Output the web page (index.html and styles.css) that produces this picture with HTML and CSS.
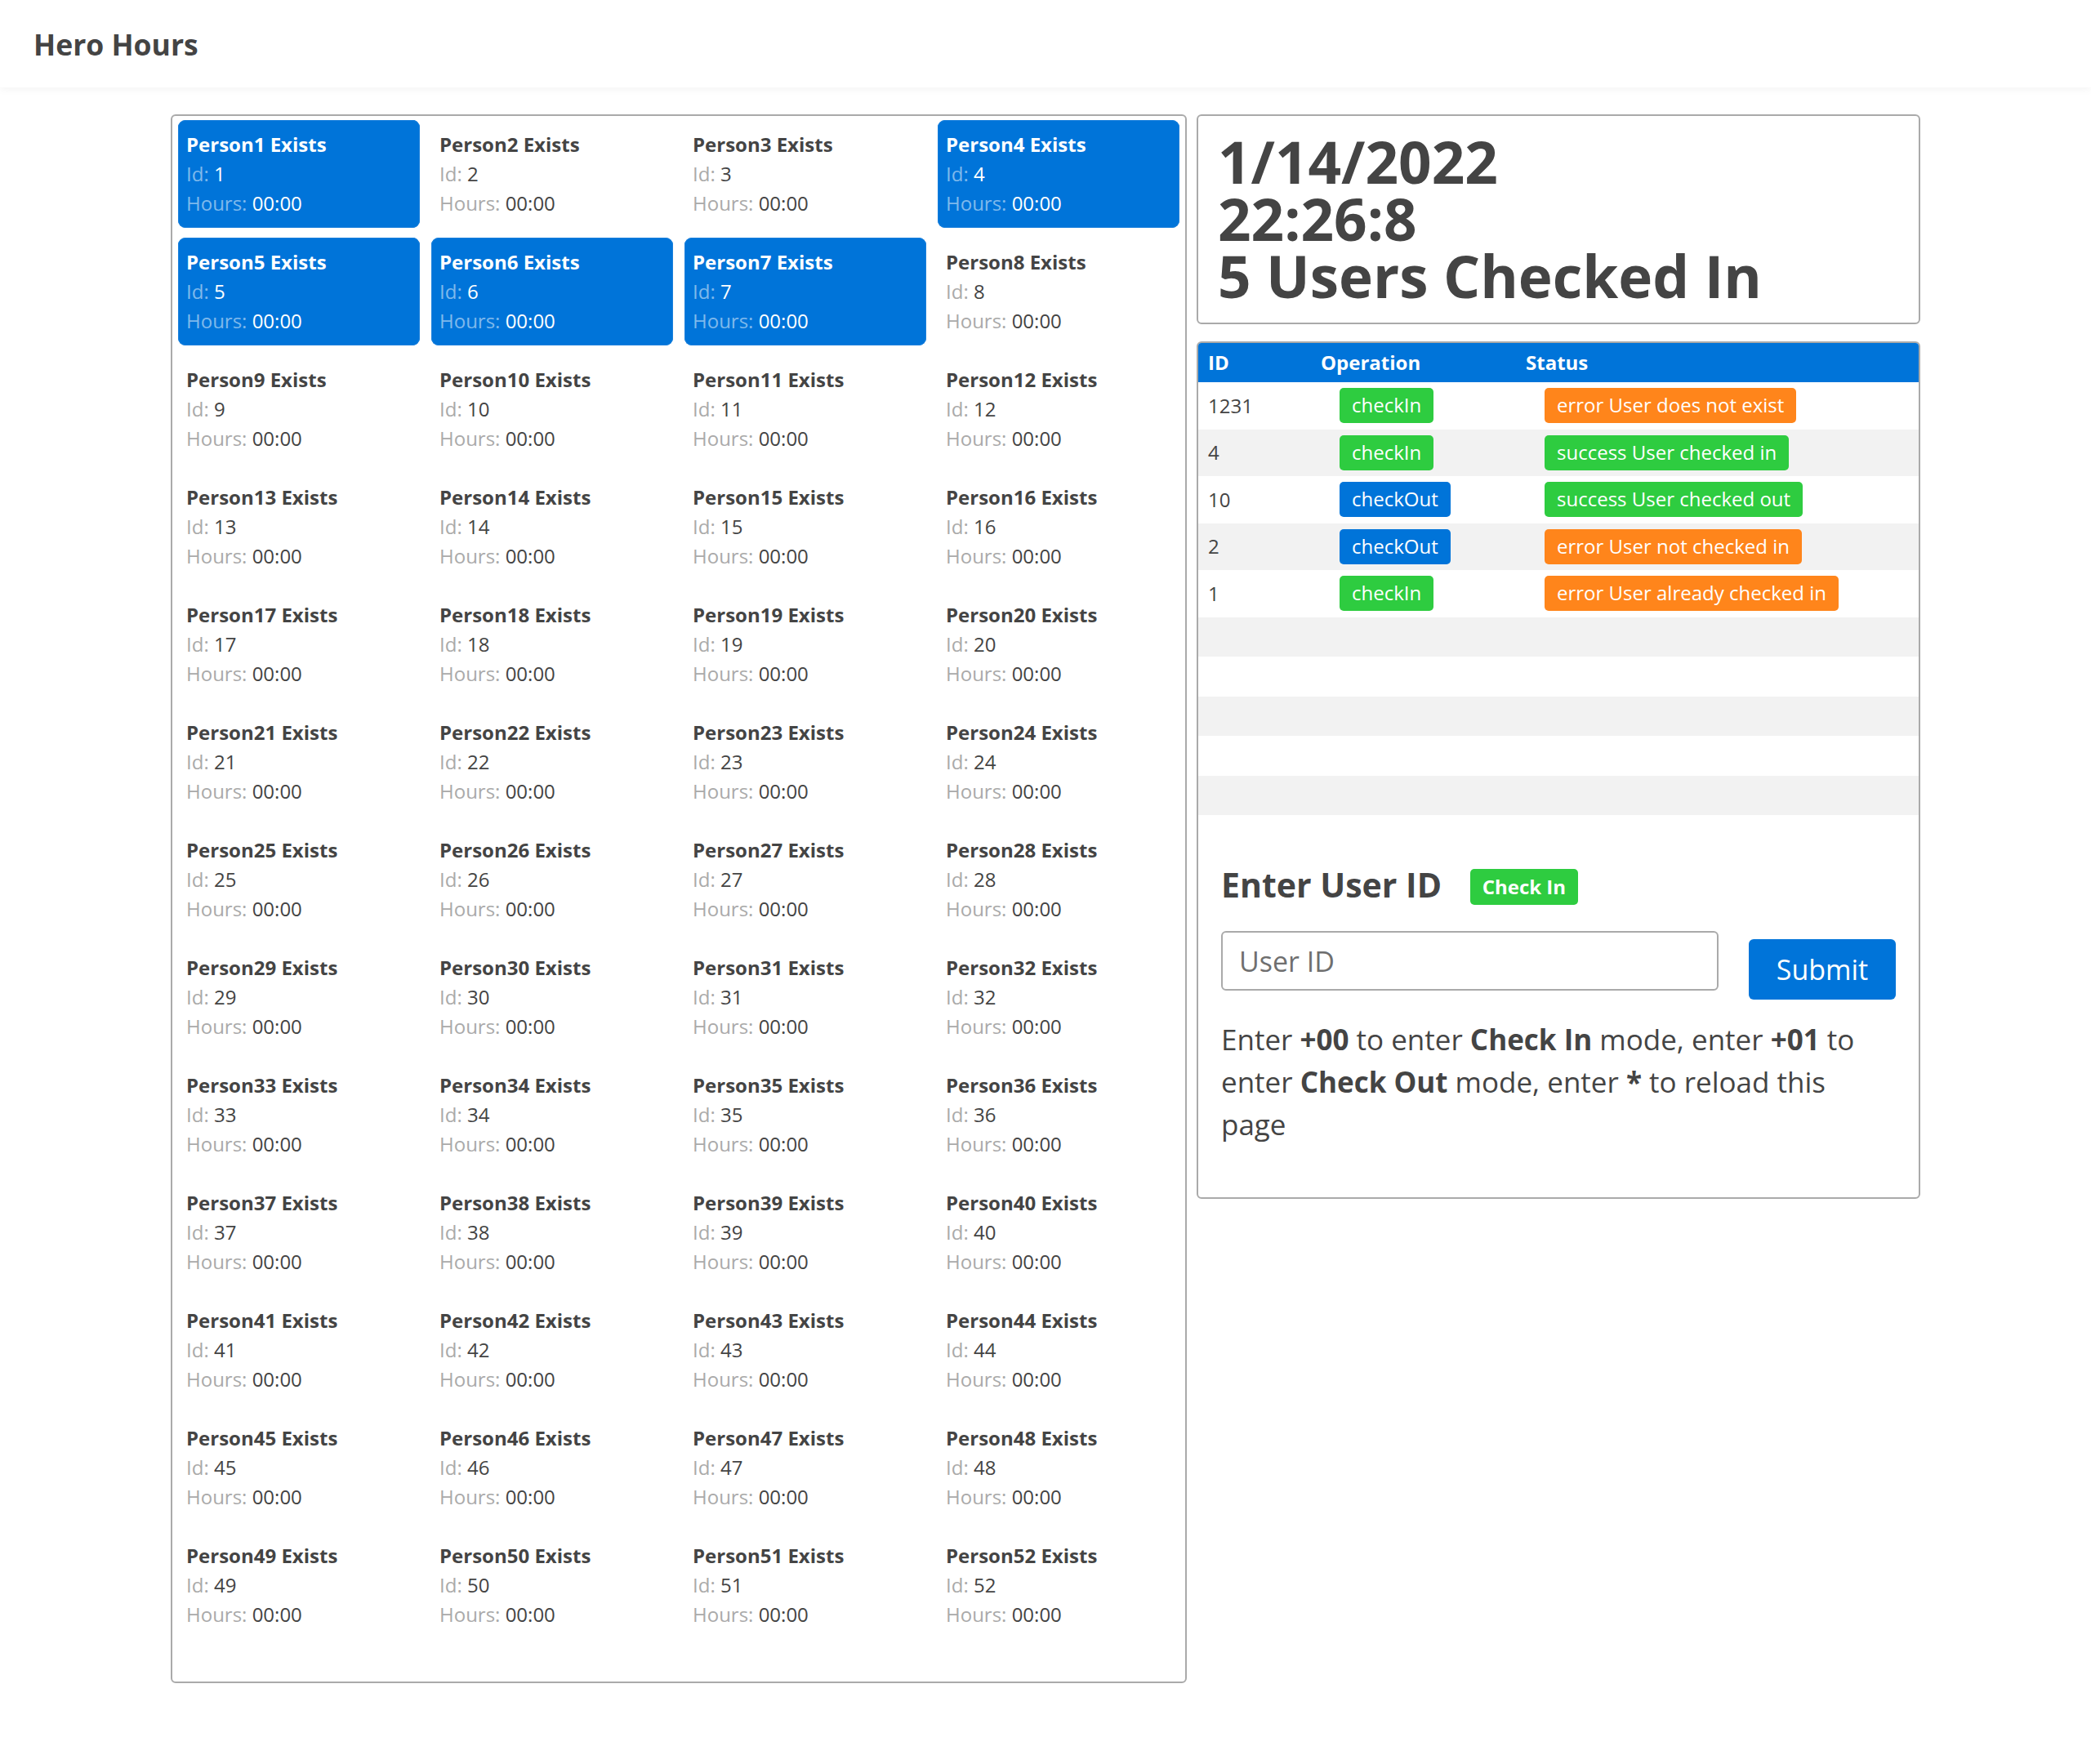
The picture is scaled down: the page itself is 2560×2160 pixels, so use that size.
FILE: index.html
```html
<!DOCTYPE html>
<html lang="en">
<head>
    <meta charset="UTF-8">
    <meta name="viewport" content="width=device-width, initial-scale=1.0">
    <title>Hero Hours</title>
    <link rel="stylesheet" href="styles.css">
</head>
<body>

<header class="topbar">
    <span class="brand">Hero Hours</span>
</header>

<main class="layout">

<section class="roster">
    <div class="person-card is-in"><div class="person-name">Person1 Exists</div><div><span class="label">Id:</span> 1</div><div><span class="label">Hours:</span> 00:00</div></div>
    <div class="person-card"><div class="person-name">Person2 Exists</div><div><span class="label">Id:</span> 2</div><div><span class="label">Hours:</span> 00:00</div></div>
    <div class="person-card"><div class="person-name">Person3 Exists</div><div><span class="label">Id:</span> 3</div><div><span class="label">Hours:</span> 00:00</div></div>
    <div class="person-card is-in"><div class="person-name">Person4 Exists</div><div><span class="label">Id:</span> 4</div><div><span class="label">Hours:</span> 00:00</div></div>
    <div class="person-card is-in"><div class="person-name">Person5 Exists</div><div><span class="label">Id:</span> 5</div><div><span class="label">Hours:</span> 00:00</div></div>
    <div class="person-card is-in"><div class="person-name">Person6 Exists</div><div><span class="label">Id:</span> 6</div><div><span class="label">Hours:</span> 00:00</div></div>
    <div class="person-card is-in"><div class="person-name">Person7 Exists</div><div><span class="label">Id:</span> 7</div><div><span class="label">Hours:</span> 00:00</div></div>
    <div class="person-card"><div class="person-name">Person8 Exists</div><div><span class="label">Id:</span> 8</div><div><span class="label">Hours:</span> 00:00</div></div>
    <div class="person-card"><div class="person-name">Person9 Exists</div><div><span class="label">Id:</span> 9</div><div><span class="label">Hours:</span> 00:00</div></div>
    <div class="person-card"><div class="person-name">Person10 Exists</div><div><span class="label">Id:</span> 10</div><div><span class="label">Hours:</span> 00:00</div></div>
    <div class="person-card"><div class="person-name">Person11 Exists</div><div><span class="label">Id:</span> 11</div><div><span class="label">Hours:</span> 00:00</div></div>
    <div class="person-card"><div class="person-name">Person12 Exists</div><div><span class="label">Id:</span> 12</div><div><span class="label">Hours:</span> 00:00</div></div>
    <div class="person-card"><div class="person-name">Person13 Exists</div><div><span class="label">Id:</span> 13</div><div><span class="label">Hours:</span> 00:00</div></div>
    <div class="person-card"><div class="person-name">Person14 Exists</div><div><span class="label">Id:</span> 14</div><div><span class="label">Hours:</span> 00:00</div></div>
    <div class="person-card"><div class="person-name">Person15 Exists</div><div><span class="label">Id:</span> 15</div><div><span class="label">Hours:</span> 00:00</div></div>
    <div class="person-card"><div class="person-name">Person16 Exists</div><div><span class="label">Id:</span> 16</div><div><span class="label">Hours:</span> 00:00</div></div>
    <div class="person-card"><div class="person-name">Person17 Exists</div><div><span class="label">Id:</span> 17</div><div><span class="label">Hours:</span> 00:00</div></div>
    <div class="person-card"><div class="person-name">Person18 Exists</div><div><span class="label">Id:</span> 18</div><div><span class="label">Hours:</span> 00:00</div></div>
    <div class="person-card"><div class="person-name">Person19 Exists</div><div><span class="label">Id:</span> 19</div><div><span class="label">Hours:</span> 00:00</div></div>
    <div class="person-card"><div class="person-name">Person20 Exists</div><div><span class="label">Id:</span> 20</div><div><span class="label">Hours:</span> 00:00</div></div>
    <div class="person-card"><div class="person-name">Person21 Exists</div><div><span class="label">Id:</span> 21</div><div><span class="label">Hours:</span> 00:00</div></div>
    <div class="person-card"><div class="person-name">Person22 Exists</div><div><span class="label">Id:</span> 22</div><div><span class="label">Hours:</span> 00:00</div></div>
    <div class="person-card"><div class="person-name">Person23 Exists</div><div><span class="label">Id:</span> 23</div><div><span class="label">Hours:</span> 00:00</div></div>
    <div class="person-card"><div class="person-name">Person24 Exists</div><div><span class="label">Id:</span> 24</div><div><span class="label">Hours:</span> 00:00</div></div>
    <div class="person-card"><div class="person-name">Person25 Exists</div><div><span class="label">Id:</span> 25</div><div><span class="label">Hours:</span> 00:00</div></div>
    <div class="person-card"><div class="person-name">Person26 Exists</div><div><span class="label">Id:</span> 26</div><div><span class="label">Hours:</span> 00:00</div></div>
    <div class="person-card"><div class="person-name">Person27 Exists</div><div><span class="label">Id:</span> 27</div><div><span class="label">Hours:</span> 00:00</div></div>
    <div class="person-card"><div class="person-name">Person28 Exists</div><div><span class="label">Id:</span> 28</div><div><span class="label">Hours:</span> 00:00</div></div>
    <div class="person-card"><div class="person-name">Person29 Exists</div><div><span class="label">Id:</span> 29</div><div><span class="label">Hours:</span> 00:00</div></div>
    <div class="person-card"><div class="person-name">Person30 Exists</div><div><span class="label">Id:</span> 30</div><div><span class="label">Hours:</span> 00:00</div></div>
    <div class="person-card"><div class="person-name">Person31 Exists</div><div><span class="label">Id:</span> 31</div><div><span class="label">Hours:</span> 00:00</div></div>
    <div class="person-card"><div class="person-name">Person32 Exists</div><div><span class="label">Id:</span> 32</div><div><span class="label">Hours:</span> 00:00</div></div>
    <div class="person-card"><div class="person-name">Person33 Exists</div><div><span class="label">Id:</span> 33</div><div><span class="label">Hours:</span> 00:00</div></div>
    <div class="person-card"><div class="person-name">Person34 Exists</div><div><span class="label">Id:</span> 34</div><div><span class="label">Hours:</span> 00:00</div></div>
    <div class="person-card"><div class="person-name">Person35 Exists</div><div><span class="label">Id:</span> 35</div><div><span class="label">Hours:</span> 00:00</div></div>
    <div class="person-card"><div class="person-name">Person36 Exists</div><div><span class="label">Id:</span> 36</div><div><span class="label">Hours:</span> 00:00</div></div>
    <div class="person-card"><div class="person-name">Person37 Exists</div><div><span class="label">Id:</span> 37</div><div><span class="label">Hours:</span> 00:00</div></div>
    <div class="person-card"><div class="person-name">Person38 Exists</div><div><span class="label">Id:</span> 38</div><div><span class="label">Hours:</span> 00:00</div></div>
    <div class="person-card"><div class="person-name">Person39 Exists</div><div><span class="label">Id:</span> 39</div><div><span class="label">Hours:</span> 00:00</div></div>
    <div class="person-card"><div class="person-name">Person40 Exists</div><div><span class="label">Id:</span> 40</div><div><span class="label">Hours:</span> 00:00</div></div>
    <div class="person-card"><div class="person-name">Person41 Exists</div><div><span class="label">Id:</span> 41</div><div><span class="label">Hours:</span> 00:00</div></div>
    <div class="person-card"><div class="person-name">Person42 Exists</div><div><span class="label">Id:</span> 42</div><div><span class="label">Hours:</span> 00:00</div></div>
    <div class="person-card"><div class="person-name">Person43 Exists</div><div><span class="label">Id:</span> 43</div><div><span class="label">Hours:</span> 00:00</div></div>
    <div class="person-card"><div class="person-name">Person44 Exists</div><div><span class="label">Id:</span> 44</div><div><span class="label">Hours:</span> 00:00</div></div>
    <div class="person-card"><div class="person-name">Person45 Exists</div><div><span class="label">Id:</span> 45</div><div><span class="label">Hours:</span> 00:00</div></div>
    <div class="person-card"><div class="person-name">Person46 Exists</div><div><span class="label">Id:</span> 46</div><div><span class="label">Hours:</span> 00:00</div></div>
    <div class="person-card"><div class="person-name">Person47 Exists</div><div><span class="label">Id:</span> 47</div><div><span class="label">Hours:</span> 00:00</div></div>
    <div class="person-card"><div class="person-name">Person48 Exists</div><div><span class="label">Id:</span> 48</div><div><span class="label">Hours:</span> 00:00</div></div>
    <div class="person-card"><div class="person-name">Person49 Exists</div><div><span class="label">Id:</span> 49</div><div><span class="label">Hours:</span> 00:00</div></div>
    <div class="person-card"><div class="person-name">Person50 Exists</div><div><span class="label">Id:</span> 50</div><div><span class="label">Hours:</span> 00:00</div></div>
    <div class="person-card"><div class="person-name">Person51 Exists</div><div><span class="label">Id:</span> 51</div><div><span class="label">Hours:</span> 00:00</div></div>
    <div class="person-card"><div class="person-name">Person52 Exists</div><div><span class="label">Id:</span> 52</div><div><span class="label">Hours:</span> 00:00</div></div>
</section>

<aside class="side">

    <div class="panel status-box">
        <h1>1/14/2022<br>22:26:8<br>5 Users Checked In</h1>
    </div>

    <div class="panel entry-box">
        <table class="log-table">
            <colgroup>
                <col class="col-id">
                <col class="col-op">
                <col>
            </colgroup>
            <thead>
                <tr><th>ID</th><th>Operation</th><th>Status</th></tr>
            </thead>
            <tbody>
                <tr class="filled"><td>1231</td><td><span class="tag green">checkIn</span></td><td><span class="tag orange">error User does not exist</span></td></tr>
                <tr class="filled"><td>4</td><td><span class="tag green">checkIn</span></td><td><span class="tag green">success User checked in</span></td></tr>
                <tr class="filled"><td>10</td><td><span class="tag blue">checkOut</span></td><td><span class="tag green">success User checked out</span></td></tr>
                <tr class="filled"><td>2</td><td><span class="tag blue">checkOut</span></td><td><span class="tag orange">error User not checked in</span></td></tr>
                <tr class="filled"><td>1</td><td><span class="tag green">checkIn</span></td><td><span class="tag orange">error User already checked in</span></td></tr>
                <tr><td></td><td></td><td></td></tr>
                <tr><td></td><td></td><td></td></tr>
                <tr><td></td><td></td><td></td></tr>
                <tr><td></td><td></td><td></td></tr>
                <tr><td></td><td></td><td></td></tr>
            </tbody>
        </table>

        <div class="entry-form">
            <h3>Enter User ID <span class="mode-badge">Check In</span></h3>
            <form class="entry-row">
                <input type="text" placeholder="User ID">
                <button type="button">Submit</button>
            </form>
            <p class="hint">Enter <strong>+00</strong> to enter <strong>Check In</strong> mode, enter <strong>+01</strong> to enter <strong>Check Out</strong> mode, enter <strong>*</strong> to reload this page</p>
        </div>
    </div>

</aside>

</main>

</body>
</html>
```

FILE: styles.css
```css
body {
    margin: 0;
    font-family: "Open Sans", "Liberation Sans", sans-serif;
    color: #444;
    background-color: #fff;
}

.topbar {
    height: 107px;
    display: flex;
    align-items: center;
    padding-left: 41px;
    box-shadow: 0 2px 10px rgba(0,0,0,0.05);
}
.brand {
    font-size: 35.5px;
    font-weight: 700;
    color: #444;
}

.layout {
    width: 2142px;
    margin: 33px auto 0;
    display: grid;
    grid-template-columns: 1244px 886px;
    column-gap: 12px;
    align-items: start;
}

/* people grid */
.roster {
    border: 2px solid #aaa;
    border-radius: 6px;
    padding: 5px 7px 52px;
    display: grid;
    grid-template-columns: repeat(4, 1fr);
    column-gap: 14px;
    row-gap: 12px;
}
.person-card {
    padding: 12px 10px;
    border-radius: 9px;
    font-size: 24px;
    line-height: 36px;
    color: #444;
}
.person-name {
    font-weight: 700;
}
.label {
    color: #aaa;
}
.person-card.is-in {
    background-color: #0074d9;
    box-shadow: inset 0 0 0 1px #1a80dc;
    color: #fff;
}
.person-card.is-in .label {
    color: rgba(255,255,255,0.5);
}

/* right side */
.side {
    display: flex;
    flex-direction: column;
    gap: 21px;
}
.panel {
    border: 2px solid #aaa;
    border-radius: 6px;
    overflow: hidden;
}
.status-box {
    padding: 21px 24px 22px;
}
.status-box h1 {
    margin: 0;
    font-size: 71px;
    line-height: 70px;
    font-weight: 700;
    color: #444;
}

.log-table {
    width: 100%;
    border-collapse: collapse;
    font-size: 24px;
    line-height: 36px;
}
.col-id {
    width: 138px;
}
.col-op {
    width: 251px;
}
.log-table th {
    height: 48px;
    padding: 0 12px;
    text-align: left;
    background-color: #0074d9;
    color: #fff;
    font-weight: 700;
}
.log-table td {
    height: 48.5px;
    padding: 0 12px;
    vertical-align: middle;
}
.log-table tr.filled td {
    height: 57.5px;
}
.log-table tbody tr:nth-child(even) {
    background-color: #f2f2f2;
}
.tag {
    display: inline-block;
    vertical-align: middle;
    margin-left: 23px;
    padding: 3px 15px 4px;
    border-radius: 5px;
    color: #fff;
}
.tag.green {
    background-color: #2ecc40;
}
.tag.blue {
    background-color: #0074d9;
}
.tag.orange {
    background-color: #ff851b;
}

.entry-form {
    padding: 60px 28px 63px;
}
.entry-form h3 {
    margin: 0;
    font-size: 41px;
    line-height: 50px;
    font-weight: 700;
}
.mode-badge {
    display: inline-block;
    vertical-align: middle;
    margin-left: 24px;
    padding: 4px 15px;
    border-radius: 5px;
    background-color: #2ecc40;
    color: #fff;
    font-size: 24px;
    line-height: 36px;
    position: relative;
    top: -2px;
}
.entry-row {
    display: flex;
    align-items: flex-start;
    gap: 37px;
    margin-top: 30px;
}
.entry-row input {
    flex: 1;
    box-sizing: border-box;
    height: 73px;
    border: 2px solid #aaa;
    border-radius: 6px;
    padding: 0 20px;
    font-family: inherit;
    font-size: 34px;
    color: #444;
}
.entry-row input::placeholder {
    color: #6f6f6f;
}
.entry-row button {
    width: 180px;
    height: 74px;
    margin-top: 10px;
    border: none;
    border-radius: 6px;
    background-color: #0074d9;
    color: #fff;
    font-family: inherit;
    font-size: 34px;
}
.hint {
    max-width: 800px;
    margin: 23px 0 0;
    font-size: 35px;
    line-height: 52px;
}
.hint strong {
    font-weight: 700;
}
```
